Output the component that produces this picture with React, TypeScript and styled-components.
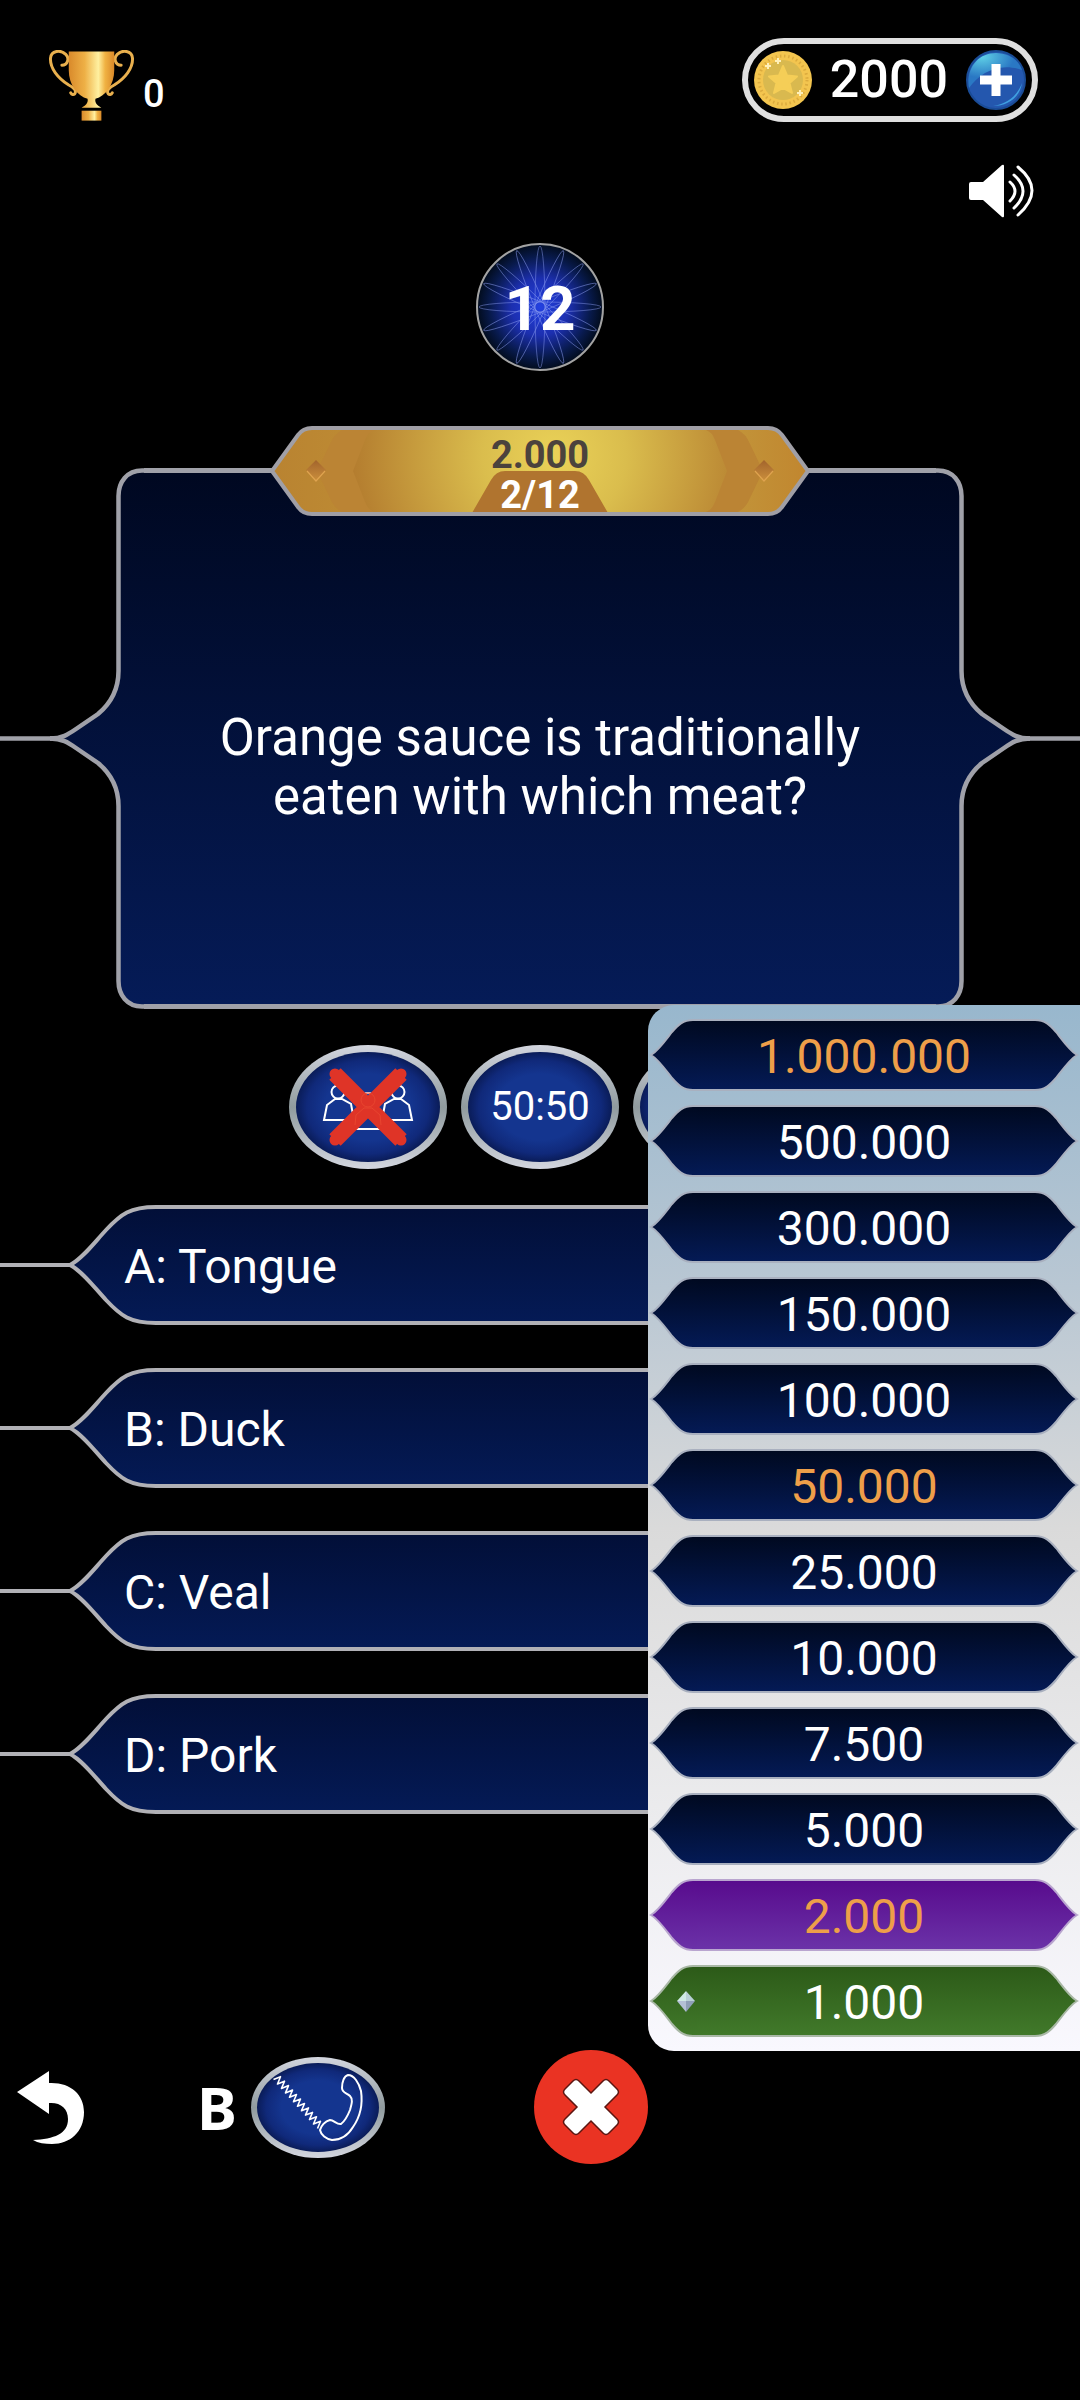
import React from "react";
import styled, { createGlobalStyle } from "styled-components";

const GlobalStyle = createGlobalStyle`
  *, *::before, *::after { box-sizing: border-box; }
  html, body { margin: 0; background: #000; }
  body { font-family: Roboto, "Open Sans", sans-serif; color: #fff; }
  button { margin: 0; padding: 0; border: 0; background: none; color: inherit; font: inherit; cursor: pointer; }
  svg { display: block; flex: none; }
`;

const Page = styled.main`
  min-height: 100vh;
  overflow: hidden;
  background: #000;
  display: flex;
  flex-direction: column;
`;

/* ---------- header ---------- */

const Header = styled.header`
  display: flex;
  justify-content: space-between;
  align-items: flex-end;
  padding: 38px 42px 0 48px;
`;

const Score = styled.div`
  display: flex;
  align-items: flex-end;
  gap: 8px;
  font-size: 38px;
  font-weight: 500;
  line-height: 56px;
`;

const Wallet = styled.div`
  display: flex;
  align-items: center;
  gap: 18px;
  height: 84px;
  padding: 0 6px;
  border: 6px solid #dfdfdf;
  border-radius: 42px;
  font-size: 52px;
  font-weight: 500;
  line-height: 60px;
`;

const SoundRow = styled.div`
  display: flex;
  justify-content: flex-end;
  padding: 42px 44px 0;
`;

/* ---------- timer and question ---------- */

const Stack = styled.div`
  display: grid;
  place-items: center;
  > * { grid-area: 1 / 1; }
`;

const Timer = styled(Stack)`
  align-self: center;
  margin-top: 25px;
  font-size: 62px;
  font-weight: 700;
  line-height: 72px;
  > span { padding-top: 4px; }
`;

const Banner = styled(Stack)`
  position: relative;
  z-index: 1;
  align-self: center;
  margin: 55px 0 -48px;
`;

const BannerText = styled.div`
  display: flex;
  flex-direction: column;
  align-items: center;
  padding-top: 8px;
  font-size: 38px;
  font-weight: 700;
  line-height: 40px;
`;

const Prize = styled.span`
  color: #4b423d;
`;

const QuestionBox = styled.section`
  display: flex;
  height: 541px;
`;

const QuestionBody = styled.div`
  flex: 1;
  display: flex;
  align-items: center;
  justify-content: center;
  padding: 56px 40px 0;
  border: solid #a0a1a9;
  border-width: 5px 0;
  background: linear-gradient(#000821, #051b57);
`;

const QuestionText = styled.h1`
  margin: 0;
  max-width: 680px;
  font-size: 51px;
  font-weight: 400;
  line-height: 59px;
  text-align: center;
`;

const MirrorSvg = styled.svg<{ $flip?: boolean }>`
  transform: ${(p) => (p.$flip ? "scaleX(-1)" : "none")};
`;

/* ---------- play area ---------- */

const Play = styled.section`
  position: relative;
  display: flex;
  flex-direction: column;
  gap: 36px;
  padding-top: 36px;
`;

const Lifelines = styled.div`
  display: flex;
  justify-content: center;
  gap: 14px;
`;

const Oval = styled.button<{ $small?: boolean }>`
  display: grid;
  place-items: center;
  width: ${(p) => (p.$small ? 134 : 158)}px;
  height: ${(p) => (p.$small ? 101 : 124)}px;
  border: ${(p) => (p.$small ? 6 : 7)}px solid transparent;
  border-radius: 50%;
  background:
    radial-gradient(closest-side, #14358f 60%, #10297a 85%, #0a1c58) padding-box,
    linear-gradient(#d3d6df, #909b9e 50%, #d3d6df) border-box;
  font-size: 40px;
  line-height: 48px;
  > svg { margin: -7px; }
`;

const Answers = styled.div`
  display: flex;
  flex-direction: column;
  gap: 43px;
`;

const AnswerButton = styled.button`
  display: grid;
  width: 100%;
  align-items: center;
  text-align: left;
  > * { grid-area: 1 / 1; }
`;

const AnswerFrame = styled.span`
  display: flex;
  align-items: center;
`;

const Wire = styled.span`
  width: 60px;
  height: 4px;
  background: #b1b1b6;
`;

const AnswerBody = styled.span`
  flex: 1;
  height: 120px;
  border: solid #b1b1b6;
  border-width: 4px 0;
  background: linear-gradient(#020f38, #041a55);
`;

const AnswerLabel = styled.span`
  padding: 4px 124px 0;
  font-size: 48px;
  line-height: 56px;
`;

/* ---------- prize ladder ---------- */

const Ladder = styled.ol`
  position: absolute;
  top: -4px;
  right: 0;
  z-index: 2;
  width: 40%;
  min-width: 320px;
  display: flex;
  flex-direction: column;
  gap: 14px;
  margin: 0;
  padding: 14px 1px;
  list-style: none;
  border-radius: 26px 0 0 26px;
  background: linear-gradient(#98b7cd, #b9c7d3 27%, #dadada 50%, #ececee 78%, #f9f8fe);
`;

const Rung = styled.li`
  display: flex;
`;

const RungBody = styled.span<{ $from: string; $to: string; $edge: string; $gold?: boolean }>`
  flex: 1;
  height: 72px;
  padding-top: 2px;
  border: solid ${(p) => p.$edge};
  border-width: 2px 0;
  background: linear-gradient(${(p) => p.$from}, ${(p) => p.$to});
  color: ${(p) => (p.$gold ? "#ee9f49" : "#fff")};
  font-size: 48px;
  line-height: 68px;
  text-align: center;
`;

/* ---------- footer ---------- */

const Footer = styled.footer`
  display: flex;
  align-items: center;
  padding: 236px 16px 0;
`;

const Hint = styled.div`
  display: flex;
  align-items: center;
  gap: 14px;
  margin: 0 149px 0 112px;
  font-family: "Noto Sans", sans-serif;
  font-size: 60px;
  font-weight: 700;
  line-height: 80px;
`;

const CloseButton = styled.button`
  display: grid;
  place-items: center;
  width: 114px;
  height: 114px;
  border-radius: 50%;
  background: #ea3323;
`;

/* ---------- drawings ---------- */

function Trophy() {
  const handle = "M13 15C19 15 21 8 17 4C12-1 2 0 1.500 8C1 18 9 28 20 35C26 38 28 41 26 44C25 45 23 45 22 43";
  return (
    <svg width="87" height="72" viewBox="-1 0 88 72" role="img" aria-label="Trophies">
      <defs>
        <linearGradient id="cup">
          <stop offset="0" stopColor="#d98a2b" />
          <stop offset="0.35" stopColor="#eeb046" />
          <stop offset="0.65" stopColor="#fff0a0" />
          <stop offset="0.8" stopColor="#f0b243" />
          <stop offset="1" stopColor="#d98828" />
        </linearGradient>
      </defs>
      <g fill="none" stroke="#e9b04e" strokeWidth="3" strokeLinecap="round">
        <path d={handle} />
        <path d={handle} transform="translate(86 0) scale(-1 1)" />
      </g>
      <path d="M20 1H66V20C66 35 57 46 47 49C46 53 49 56 53 58H33C37 56 40 53 39 49C29 46 20 35 20 20Z" fill="url(#cup)" />
      <rect x="33" y="61" width="20" height="10" fill="url(#cup)" />
    </svg>
  );
}

function Coin() {
  return (
    <svg width="58" height="58" viewBox="0 0 58 58" aria-hidden="true">
      <circle cx="29" cy="29" r="29" fill="#f3c54f" />
      <circle cx="29" cy="29" r="24" fill="none" stroke="#dcab3e" strokeWidth="3" strokeDasharray="1.500 2.700" />
      <circle cx="29" cy="29" r="20" fill="#d9b94f" />
      <path
        d="M29 15L33 24.500L43 25.500L35.500 32L38 42L29 37L20 42L22.500 32L15 25.500L25 24.500Z"
        fill="#f5ce57"
        stroke="#f5ce57"
        strokeWidth="2"
        strokeLinejoin="round"
      />
      <path d="M14 12v6M11 15h6M24 7v6M21 10h6M46 39v6M43 42h6" stroke="#fff0b8" strokeWidth="2" />
    </svg>
  );
}

function Plus() {
  return (
    <svg width="60" height="60" viewBox="0 0 60 60" aria-hidden="true">
      <defs>
        <radialGradient id="gloss" cx="0.25" cy="0.1" r="0.6">
          <stop offset="0" stopColor="#5fd0e6" />
          <stop offset="1" stopColor="#2a78c4" />
        </radialGradient>
      </defs>
      <circle cx="30" cy="30" r="29" fill="#2457ae" stroke="#1a4c97" strokeWidth="2" />
      <path d="M3 38C0 18 12 3 30 3C42 3 52 9 56 20C34 12 14 22 3 38Z" fill="url(#gloss)" />
      <path d="M27 56C42 56 54 47 56 33C51 46 42 53 27 56Z" fill="#3f9fe0" />
      <path d="M30 14V46M14 30H46" stroke="#fff" strokeWidth="9" />
    </svg>
  );
}

function Speaker() {
  return (
    <svg width="68" height="54" viewBox="0 0 68 54" aria-hidden="true">
      <path d="M3 18H15L34 1Q36 0 36 2V52Q36 54 34 53L15 36H3Q1 36 1 34V20Q1 18 3 18Z" fill="#fff" />
      <path
        d="M42 18Q52 27 42 37M46 11Q64 27 46 44M50 3Q78 26 50 51"
        fill="none"
        stroke="#fff"
        strokeWidth="3"
        strokeLinecap="round"
      />
    </svg>
  );
}

function TimerDial() {
  return (
    <svg width="128" height="128" viewBox="0 0 128 128" aria-hidden="true">
      <defs>
        <radialGradient id="dial">
          <stop offset="0" stopColor="#2340e0" />
          <stop offset="0.45" stopColor="#1c2fb0" />
          <stop offset="0.8" stopColor="#081a4c" />
          <stop offset="1" stopColor="#020c1c" />
        </radialGradient>
      </defs>
      <circle cx="64" cy="64" r="63" fill="url(#dial)" stroke="#a3a3a3" strokeWidth="2" />
      <g fill="none" stroke="#8b9cf0" strokeOpacity="0.6" strokeWidth="0.800">
        {[0, 1, 2, 3, 4, 5, 6, 7].map((i) => (
          <ellipse key={i} cx="64" cy="64" rx="61" ry="5" transform={`rotate(${i * 22.5} 64 64)`} />
        ))}
      </g>
    </svg>
  );
}

function BannerArt() {
  const plate = "M2 45L28 9Q33 2 42 2H498Q507 2 512 9L538 45L512 81Q507 88 498 88H42Q33 88 28 81Z";
  return (
    <svg width="540" height="90" viewBox="0 0 540 90" aria-hidden="true">
      <defs>
        <linearGradient id="plate">
          <stop offset="0" stopColor="#b98331" />
          <stop offset="0.14" stopColor="#bd8a33" />
          <stop offset="0.85" stopColor="#c2953a" />
          <stop offset="1" stopColor="#c1862f" />
        </linearGradient>
        <radialGradient id="glow" gradientUnits="userSpaceOnUse" cx="282" cy="30" r="205">
          <stop offset="0" stopColor="#ead258" />
          <stop offset="0.35" stopColor="#dabd4d" />
          <stop offset="1" stopColor="#b37b2e" />
        </radialGradient>
        <linearGradient id="stud" x2="0" y2="1">
          <stop offset="0" stopColor="#a2642c" />
          <stop offset="1" stopColor="#cb8f3c" />
        </linearGradient>
      </defs>
      <path d={plate} fill="url(#plate)" />
      <g transform="translate(2 0)">
        <path d="M70 4Q62 8 58 18L45 45L58 72Q62 82 70 86H466Q474 82 478 72L491 45L478 18Q474 8 466 4Z" fill="#bb8434" />
        <path d="M102 4Q96 6 93 14L81 45L93 76Q96 84 102 86H434Q440 84 443 76L455 45L443 14Q440 6 434 4Z" fill="url(#glow)" />
        <path d="M44 34L54 44L44 55L34 44ZM492 34L502 44L492 55L482 44Z" fill="url(#stud)" />
        <path d="M35 45L44 55L53 45M483 45L492 55L501 45" fill="none" stroke="#dfa34f" strokeWidth="1.200" />
        <path d="M200 87L219 54Q224 45 233 45H303Q312 45 317 54L336 87Z" fill="#b0742f" />
      </g>
      <path d={plate} fill="none" stroke="#a09fa6" strokeWidth="4" strokeLinejoin="round" />
    </svg>
  );
}

function QuestionEdge({ flip }: { flip?: boolean }) {
  const top = "M144 2.500H142C127 2.500 118.500 14 118.500 28V203C118.500 222 110 236 98 246L76 261C68 266.500 62 270.500 50 270.500";
  const bottom = "M144 538.500H142C127 538.500 118.500 527 118.500 513V338C118.500 319 110 305 98 295L76 280C68 274.500 62 270.500 50 270.500";
  return (
    <MirrorSvg $flip={flip} width="144" height="541" viewBox="0 0 144 541" aria-hidden="true">
      <defs>
        <linearGradient id="night" gradientUnits="userSpaceOnUse" x1="0" y1="5" x2="0" y2="536">
          <stop offset="0" stopColor="#000821" />
          <stop offset="1" stopColor="#051b57" />
        </linearGradient>
      </defs>
      <path
        d="M144 2.500H142C127 2.500 118.500 14 118.500 28V203C118.500 222 110 236 98 246L76 261L62 270.500L76 280L98 295C110 305 118.500 319 118.500 338V513C118.500 527 127 538.500 142 538.500H144Z"
        fill="url(#night)"
      />
      <path d={top} fill="none" stroke="#a0a1a9" strokeWidth="4.500" />
      <path d={bottom} fill="none" stroke="#a0a1a9" strokeWidth="4.500" />
      <path d="M0 270.500H56" stroke="#a0a1a9" strokeWidth="4.500" />
    </MirrorSvg>
  );
}

function AnswerEdge({ flip }: { flip?: boolean }) {
  return (
    <MirrorSvg $flip={flip} width="100" height="120" viewBox="0 0 100 120" aria-hidden="true">
      <defs>
        <linearGradient id="answer" x2="0" y2="1">
          <stop offset="0" stopColor="#020f38" />
          <stop offset="1" stopColor="#041a55" />
        </linearGradient>
      </defs>
      <path
        d="M101 2H96C70 2 61 9 46 25C34 38 22 54 10 60C22 66 34 82 46 95C61 111 70 118 96 118H101"
        fill="url(#answer)"
        stroke="#b1b1b6"
        strokeWidth="4"
      />
      <path d="M0 60H11" stroke="#b1b1b6" strokeWidth="4" />
    </MirrorSvg>
  );
}

type Tone = { id: string; from: string; to: string; edge: string };

const tones: Record<string, Tone> = {
  idle: { id: "idle", from: "#000920", to: "#041a55", edge: "#a9b0bf" },
  current: { id: "current", from: "#580b8d", to: "#6b32a8", edge: "#b9a5cf" },
  won: { id: "won", from: "#2c5a18", to: "#41792a", edge: "#a9b8a6" },
};

function RungEdge({ tone, flip, gem }: { tone: Tone; flip?: boolean; gem?: boolean }) {
  return (
    <MirrorSvg $flip={flip} width="48" height="72" viewBox="0 0 48 72" aria-hidden="true">
      <defs>
        <linearGradient id={tone.id} x2="0" y2="1">
          <stop offset="0" stopColor={tone.from} />
          <stop offset="1" stopColor={tone.to} />
        </linearGradient>
      </defs>
      <path
        d="M49 1H44C34 1 29 6 23 13C16 22 9 32 2 36C9 40 16 50 23 59C29 66 34 71 44 71H49"
        fill={`url(#${tone.id})`}
        stroke={tone.edge}
        strokeWidth="2"
      />
      {gem && (
        <g>
          <path d="M37 26L28 36H37Z" fill="#cfe9e4" />
          <path d="M37 26L46 36H37Z" fill="#b9cfd6" />
          <path d="M28 36H37V47Z" fill="#b4c0d6" />
          <path d="M46 36H37V47Z" fill="#8f9fb8" />
        </g>
      )}
    </MirrorSvg>
  );
}

function Audience() {
  return (
    <svg width="158" height="124" viewBox="0 0 158 124" aria-hidden="true">
      <g fill="none" stroke="#fff" strokeWidth="2">
        <circle cx="49" cy="47" r="6.500" />
        <circle cx="109" cy="47" r="6.500" />
        <path d="M35 75L38 60L46 54H53L62 59L65 75ZM93 75L96 59L105 54H112L120 60L123 75Z" />
        <circle cx="79" cy="55" r="7" />
        <path d="M64 84L66 70L75 63H83L92 70L94 84Z" />
      </g>
      <path d="M46 29L112 95M112 29L46 95" stroke="#df3427" strokeWidth="16" />
      <path d="M46 29L112 95M112 29L46 95" stroke="#df3427" strokeWidth="11" strokeLinecap="round" />
      <g fill="none" stroke="#e8452f">
        <circle cx="79" cy="55" r="7" />
        <path d="M66 80L67 70L75 63H83L91 70L92 80" />
      </g>
    </svg>
  );
}

// Coiled cord: alternates either side of the line from the rim to the handset.
const cord = Array.from({ length: 23 }, (_, i) => {
  const t = i / 22;
  const side = i % 2 ? 2.5 : -2.5;
  return `${(25 + 44 * t + side).toFixed(1)} ${(20 + 49 * t - side).toFixed(1)}`;
}).join("L");

function Phone() {
  return (
    <svg width="134" height="101" viewBox="0 0 134 101" aria-hidden="true">
      <g fill="none" stroke="#fff" strokeWidth="2" strokeLinejoin="round">
        <path d={`M${cord}`} strokeWidth="1.600" />
        <path d="M97 18C103 18 108 26 110 34C112 48 109 60 102 70C96 80 88 83 81 83C75 82 70 78 69 73C70 69 74 64 79 63C83 63 86 68 90 67C94 64 97 58 99 53C101 46 102 42 99 39C96 36 91 36 91 31C91 25 93 19 97 18Z" />
      </g>
    </svg>
  );
}

function BackArrow() {
  return (
    <svg width="69" height="75" viewBox="0 0 69 75" aria-hidden="true">
      <path
        d="M1 22L33 1V13C54 12 68 24 68 42C68 62 54 74 36 74C29 74 22 73 17 70C38 69 52 64 52 49C52 38 44 32 33 33V44Z"
        fill="#fff"
      />
    </svg>
  );
}

function Cross() {
  return (
    <svg width="60" height="60" viewBox="0 0 60 60" aria-hidden="true">
      <path
        d="M30 16L42 4Q45 1 48 4L56 12Q59 15 56 18L44 30L56 42Q59 45 56 48L48 56Q45 59 42 56L30 44L18 56Q15 59 12 56L4 48Q1 45 4 42L16 30L4 18Q1 15 4 12L12 4Q15 1 18 4Z"
        fill="#fff"
        stroke="#5c1611"
        strokeWidth="1.500"
      />
    </svg>
  );
}

/* ---------- page ---------- */

const answers = ["A: Tongue", "B: Duck", "C: Veal", "D: Pork"];

const prizes: { value: string; gold?: boolean; tone?: string }[] = [
  { value: "1.000.000", gold: true },
  { value: "500.000" },
  { value: "300.000" },
  { value: "150.000" },
  { value: "100.000" },
  { value: "50.000", gold: true },
  { value: "25.000" },
  { value: "10.000" },
  { value: "7.500" },
  { value: "5.000" },
  { value: "2.000", gold: true, tone: "current" },
  { value: "1.000", tone: "won" },
];

export default function App() {
  return (
    <Page>
      <GlobalStyle />
      <Header>
        <Score>
          <Trophy />
          <span>0</span>
        </Score>
        <Wallet>
          <Coin />
          <span>2000</span>
          <button type="button" aria-label="Add coins">
            <Plus />
          </button>
        </Wallet>
      </Header>
      <SoundRow>
        <button type="button" aria-label="Sound">
          <Speaker />
        </button>
      </SoundRow>
      <Timer>
        <TimerDial />
        <span>12</span>
      </Timer>
      <Banner>
        <BannerArt />
        <BannerText>
          <Prize>2.000</Prize>
          <span>2/12</span>
        </BannerText>
      </Banner>
      <QuestionBox>
        <QuestionEdge />
        <QuestionBody>
          <QuestionText>Orange sauce is traditionally eaten with which meat?</QuestionText>
        </QuestionBody>
        <QuestionEdge flip />
      </QuestionBox>
      <Play>
        <Lifelines>
          <Oval type="button" aria-label="Ask the audience">
            <Audience />
          </Oval>
          <Oval type="button">50:50</Oval>
          <Oval type="button" aria-label="Phone a friend" />
        </Lifelines>
        <Answers>
          {answers.map((answer) => (
            <AnswerButton type="button" key={answer}>
              <AnswerFrame>
                <Wire />
                <AnswerEdge />
                <AnswerBody />
                <AnswerEdge flip />
                <Wire />
              </AnswerFrame>
              <AnswerLabel>{answer}</AnswerLabel>
            </AnswerButton>
          ))}
        </Answers>
        <Ladder>
          {prizes.map(({ value, gold, tone }) => {
            const t = tones[tone ?? "idle"];
            return (
              <Rung key={value}>
                <RungEdge tone={t} gem={tone === "won"} />
                <RungBody $from={t.from} $to={t.to} $edge={t.edge} $gold={gold}>
                  {value}
                </RungBody>
                <RungEdge tone={t} flip />
              </Rung>
            );
          })}
        </Ladder>
      </Play>
      <Footer>
        <button type="button" aria-label="Back">
          <BackArrow />
        </button>
        <Hint>
          <span>B</span>
          <Oval type="button" $small aria-label="Friend's answer">
            <Phone />
          </Oval>
        </Hint>
        <CloseButton type="button" aria-label="Close">
          <Cross />
        </CloseButton>
      </Footer>
    </Page>
  );
}
